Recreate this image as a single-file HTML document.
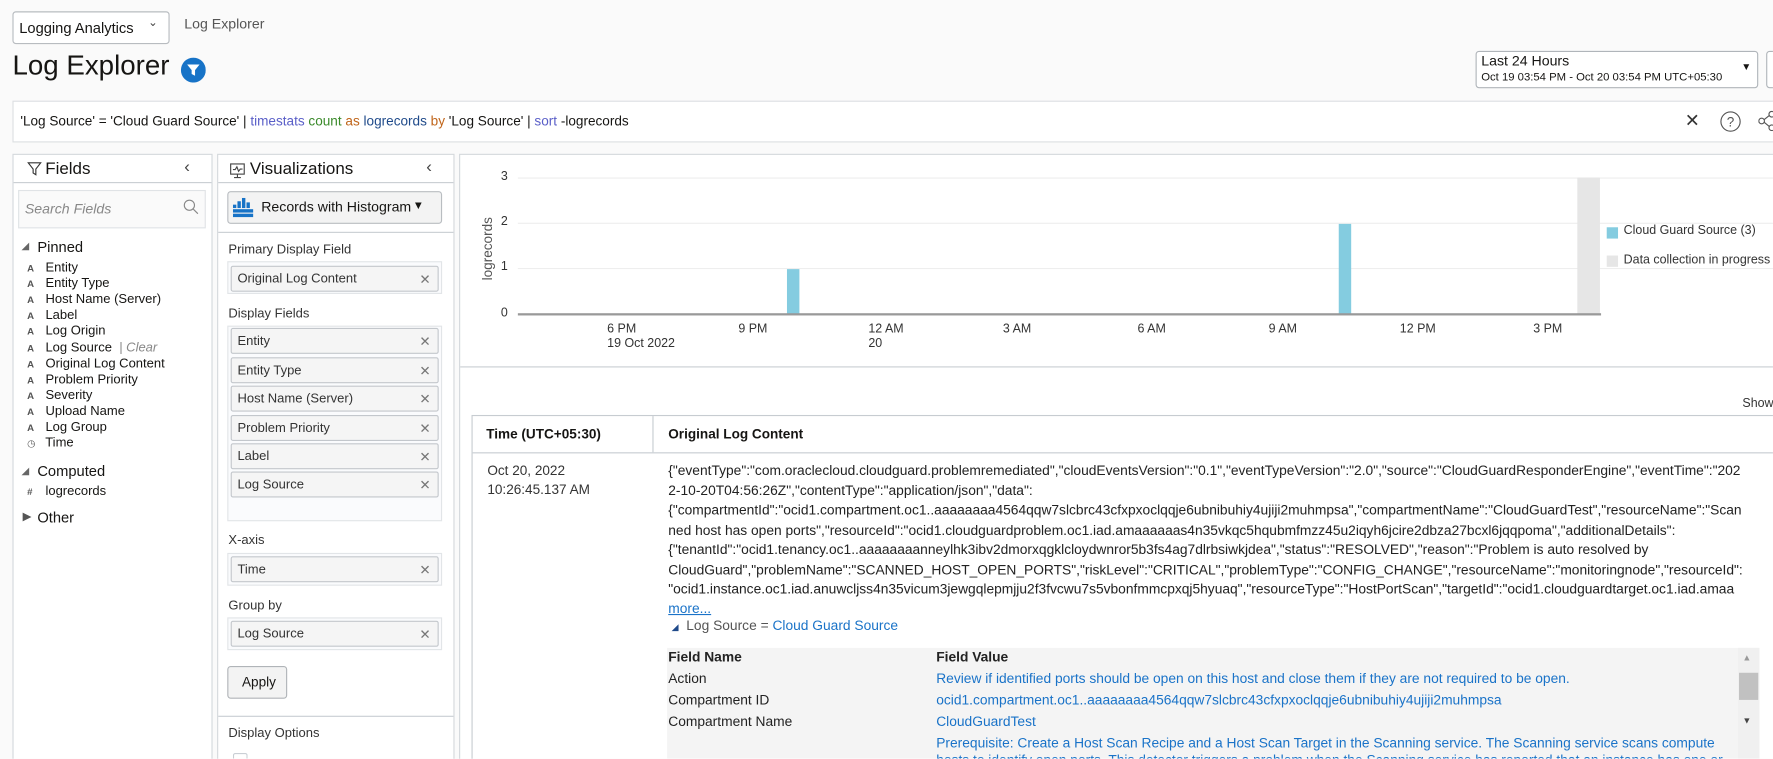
<!DOCTYPE html>
<html><head><meta charset="utf-8">
<style>
*{box-sizing:border-box;margin:0;padding:0}
body{width:1773px;height:759px;overflow:hidden;background:#fafafa;font-family:"Liberation Sans",Arial,sans-serif;font-size:12px;color:#161513;position:relative}
#w{position:absolute;left:0;top:0;width:1568px;height:671px;overflow:hidden;transform:scale(1.1307);transform-origin:0 0}
.a{position:absolute;white-space:nowrap}
.box{position:absolute;border:1px solid #c7cdd3;background:#fff}
.chip{position:absolute;left:204px;width:184px;height:23px;background:#f5f5f5;border:1px solid #c3c7cc;border-radius:2px;font-size:11.5px;padding:5px 0 0 5px;color:#333}
.chip .x{position:absolute;right:6px;top:4px;color:#777;font-size:12px}
.fl{position:absolute;left:24px;font-size:11.5px;color:#161513;white-space:nowrap}
.fl b{display:inline-block;width:13px;font-size:8.5px;color:#555;font-weight:bold}
.lbl{position:absolute;left:202px;font-size:11.5px;color:#333}
.ax{position:absolute;font-size:11px;color:#333;white-space:nowrap}
.lc{position:absolute;left:591px;font-size:12.2px;color:#222;white-space:nowrap}
.blue{color:#1a73c8}
</style></head><body><div id="w">

<div class="box" style="left:11px;top:10px;width:139px;height:29px;border-radius:3px;border-color:#b8bcc0"></div>
<div class="a" style="left:17px;top:17px;font-size:13px">Logging Analytics</div>
<div class="a" style="left:131px;top:15px;font-size:10px;color:#444">&#8964;</div>
<div class="a" style="left:163px;top:14px;font-size:12.5px;color:#555">Log Explorer</div>
<div class="a" style="left:11px;top:45px;font-size:24.5px;color:#161513">Log Explorer</div>
<svg class="a" style="left:160px;top:51px" width="22" height="22" viewBox="0 0 22 22"><circle cx="11" cy="11" r="11" fill="#1773c7"/><path d="M5.5 6h11l-4 5v5l-3 -1.5v-3.5z" fill="#fff"/></svg>

<div class="box" style="left:1305px;top:45px;width:250px;height:33px;border-radius:3px;border-color:#b0b5ba"></div>
<div class="a" style="left:1310px;top:47px;font-size:12.5px">Last 24 Hours</div>
<div class="a" style="left:1310px;top:63px;font-size:10px">Oct 19 03:54 PM - Oct 20 03:54 PM UTC+05:30</div>
<div class="a" style="left:1540px;top:54px;font-size:9px">&#9660;</div>
<div class="box" style="left:1562px;top:45px;width:20px;height:33px;border-radius:3px;border-color:#b0b5ba"></div>

<div class="box" style="left:11px;top:89px;width:1580px;height:37px;border-color:#dcdfe2;background:#fff"></div>
<div class="a" style="left:18px;top:100px;font-size:12px"><span>'Log Source' = 'Cloud Guard Source' | </span><span style="color:#5a5fc8">timestats</span> <span style="color:#3a8a2a">count</span> <span style="color:#c0651a">as</span> <span style="color:#1f4a8a">logrecords</span> <span style="color:#c0651a">by</span> 'Log Source' | <span style="color:#5a5fc8">sort</span> -logrecords</div>
<div class="a" style="left:1490px;top:97px;font-size:16px;color:#333">&#10005;</div>
<svg class="a" style="left:1521px;top:98px" width="19" height="19"><circle cx="9.5" cy="9.5" r="8.5" fill="none" stroke="#555"/><text x="9.5" y="14" font-size="12" text-anchor="middle" fill="#555" font-family="Liberation Sans">?</text></svg>
<svg class="a" style="left:1555px;top:98px" width="18" height="18"><circle cx="3" cy="9" r="2.5" fill="none" stroke="#555"/><circle cx="12" cy="3" r="2.5" fill="none" stroke="#555"/><circle cx="12" cy="15" r="2.5" fill="none" stroke="#555"/><path d="M5 8L10 4M5 10L10 14" stroke="#555"/></svg>

<div class="box" style="left:11px;top:136px;width:177px;height:540px;border-color:#d4d8dc"></div>
<div style="position:absolute;left:12px;top:161px;width:175px;height:1px;background:#c9ced3"></div>
<svg class="a" style="left:24px;top:143px" width="13" height="13"><path d="M1 1h11l-4.3 5.5v5l-2.4 -1.5v-3.5z" fill="none" stroke="#333"/></svg>
<div class="a" style="left:40px;top:141px;font-size:15px">Fields</div>
<div class="a" style="left:163px;top:139px;font-size:15px;color:#444">&#8249;</div>
<div class="box" style="left:16px;top:168px;width:166px;height:34px;border-color:#e0e3e6;background:#fafafa"></div>
<div class="a" style="left:22px;top:178px;font-size:12.5px;font-style:italic;color:#888">Search Fields</div>
<svg class="a" style="left:162px;top:176px" width="14" height="14"><circle cx="5.5" cy="5.5" r="4.5" fill="none" stroke="#888"/><path d="M9 9l4 4" stroke="#888"/></svg>
<div class="a" style="left:19px;top:212px;font-size:9px;color:#666">&#9698;</div>
<div class="a" style="left:33px;top:211px;font-size:13px">Pinned</div>
<div class="fl" style="top:231px"><b>A</b> Entity</div>
<div class="fl" style="top:245px"><b>A</b> Entity Type</div>
<div class="fl" style="top:259px"><b>A</b> Host Name (Server)</div>
<div class="fl" style="top:273px"><b>A</b> Label</div>
<div class="fl" style="top:287px"><b>A</b> Log Origin</div>
<div class="fl" style="top:302px"><b>A</b> Log Source &nbsp;<span style="color:#888;font-style:italic">| Clear</span></div>
<div class="fl" style="top:316px"><b>A</b> Original Log Content</div>
<div class="fl" style="top:330px"><b>A</b> Problem Priority</div>
<div class="fl" style="top:344px"><b>A</b> Severity</div>
<div class="fl" style="top:358px"><b>A</b> Upload Name</div>
<div class="fl" style="top:372px"><b>A</b> Log Group</div>
<div class="fl" style="top:386px"><b style="font-weight:normal">&#9719;</b> Time</div>
<div class="a" style="left:19px;top:411px;font-size:9px;color:#666">&#9698;</div>
<div class="a" style="left:33px;top:409px;font-size:13px">Computed</div>
<div class="fl" style="top:429px"><b>#</b> logrecords</div>
<div class="a" style="left:20px;top:452px;font-size:10px;color:#555">&#9654;</div>
<div class="a" style="left:33px;top:450px;font-size:13px">Other</div>

<div class="box" style="left:192px;top:136px;width:210px;height:540px;border-color:#d4d8dc"></div>
<div style="position:absolute;left:193px;top:161px;width:208px;height:1px;background:#c9ced3"></div>
<div style="position:absolute;left:193px;top:205px;width:208px;height:1px;background:#c9ced3"></div>
<div style="position:absolute;left:193px;top:633px;width:208px;height:1px;background:#c9ced3"></div>
<svg class="a" style="left:203px;top:144px" width="14" height="14"><rect x="1" y="1" width="12" height="9" fill="none" stroke="#444"/><path d="M3 6l2 0 1.5-2.5 1.5 4 1.5-2h2M7 10v3M4 13h6" fill="none" stroke="#444"/></svg>
<div class="a" style="left:221px;top:141px;font-size:15px">Visualizations</div>
<div class="a" style="left:377px;top:139px;font-size:15px;color:#444">&#8249;</div>
<div class="box" style="left:201px;top:169px;width:190px;height:29px;background:#f3f3f3;border-color:#b9bdc1;border-radius:3px"></div>
<svg class="a" style="left:206px;top:175px" width="18" height="18"><g fill="#1773c7"><rect x="0" y="6" width="3" height="3"/><rect x="4" y="3" width="3" height="6"/><rect x="8" y="0" width="3" height="9"/><rect x="12" y="4" width="3" height="5"/><rect x="0" y="10" width="18" height="3"/><rect x="0" y="14" width="18" height="3"/></g></svg>
<div class="a" style="left:231px;top:176px;font-size:12.5px">Records with Histogram</div>
<div class="a" style="left:365px;top:177px;font-size:10px">&#9660;</div>
<div class="lbl" style="top:215px">Primary Display Field</div>
<div class="box" style="left:201px;top:231px;width:190px;height:29px;border-color:#e2e5e8;background:#fafbfd"></div>
<div class="chip" style="top:235px">Original Log Content<span class="x">&#10005;</span></div>
<div class="lbl" style="top:272px">Display Fields</div>
<div class="box" style="left:201px;top:288px;width:190px;height:173px;border-color:#e2e5e8;background:#fafbfd"></div>
<div class="chip" style="top:290px">Entity<span class="x">&#10005;</span></div>
<div class="chip" style="top:316px">Entity Type<span class="x">&#10005;</span></div>
<div class="chip" style="top:341px">Host Name (Server)<span class="x">&#10005;</span></div>
<div class="chip" style="top:367px">Problem Priority<span class="x">&#10005;</span></div>
<div class="chip" style="top:392px">Label<span class="x">&#10005;</span></div>
<div class="chip" style="top:417px">Log Source<span class="x">&#10005;</span></div>
<div class="lbl" style="top:472px">X-axis</div>
<div class="box" style="left:201px;top:489px;width:190px;height:29px;border-color:#e2e5e8;background:#fafbfd"></div>
<div class="chip" style="top:492px">Time<span class="x">&#10005;</span></div>
<div class="lbl" style="top:530px">Group by</div>
<div class="box" style="left:201px;top:546px;width:190px;height:29px;border-color:#e2e5e8;background:#fafbfd"></div>
<div class="chip" style="top:549px">Log Source<span class="x">&#10005;</span></div>
<div class="box" style="left:201px;top:589px;width:53px;height:29px;background:#f3f3f3;border-color:#b0b4b8;border-radius:3px"></div>
<div class="a" style="left:214px;top:596px;font-size:12px">Apply</div>
<div class="lbl" style="top:643px">Display Options</div>
<div class="box" style="left:206px;top:666px;width:13px;height:5px;border-radius:2px 2px 0 0;border-bottom:none"></div>

<div class="box" style="left:406px;top:136px;width:1380px;height:540px;border-color:#d4d8dc"></div>
<div style="position:absolute;left:407px;top:324px;width:1366px;height:1px;background:#c9ced3"></div>
<div style="position:absolute;left:458px;top:157px;width:1115px;height:1px;background:#eee"></div>
<div style="position:absolute;left:458px;top:197px;width:1115px;height:1px;background:#eee"></div>
<div style="position:absolute;left:458px;top:237px;width:1115px;height:1px;background:#eee"></div>
<div style="position:absolute;left:1395px;top:157px;width:20px;height:121px;background:#e6e6e6"></div>
<div style="position:absolute;left:696px;top:238px;width:11px;height:40px;background:#84cce0"></div>
<div style="position:absolute;left:1184px;top:198px;width:11px;height:80px;background:#84cce0"></div>
<div style="position:absolute;left:458px;top:277px;width:958px;height:2px;background:#999"></div>
<div class="ax" style="left:443px;top:150px">3</div>
<div class="ax" style="left:443px;top:190px">2</div>
<div class="ax" style="left:443px;top:230px">1</div>
<div class="ax" style="left:443px;top:271px">0</div>
<div class="ax" style="left:424px;top:248px;transform:rotate(-90deg);transform-origin:0 0;font-size:12px;color:#555">logrecords</div>
<div class="ax" style="left:537px;top:285px">6 PM</div>
<div class="ax" style="left:537px;top:298px">19 Oct 2022</div>
<div class="ax" style="left:653px;top:285px">9 PM</div>
<div class="ax" style="left:768px;top:285px">12 AM</div>
<div class="ax" style="left:768px;top:298px">20</div>
<div class="ax" style="left:887px;top:285px">3 AM</div>
<div class="ax" style="left:1006px;top:285px">6 AM</div>
<div class="ax" style="left:1122px;top:285px">9 AM</div>
<div class="ax" style="left:1238px;top:285px">12 PM</div>
<div class="ax" style="left:1356px;top:285px">3 PM</div>
<div style="position:absolute;left:1421px;top:201px;width:10px;height:10px;background:#84cce0"></div>
<div class="ax" style="left:1436px;top:198px">Cloud Guard Source (3)</div>
<div style="position:absolute;left:1421px;top:226px;width:10px;height:10px;background:#e6e6e6"></div>
<div class="ax" style="left:1436px;top:224px">Data collection in progress</div>
<div class="ax" style="left:1541px;top:351px">Show</div>

<div class="box" style="left:417px;top:367px;width:1370px;height:310px;border-color:#c7ccd1"></div>
<div style="position:absolute;left:418px;top:400px;width:1356px;height:1px;background:#c7ccd1"></div>
<div style="position:absolute;left:577px;top:368px;width:1px;height:32px;background:#c7ccd1"></div>
<div class="a" style="left:430px;top:377px;font-size:12px;font-weight:bold">Time (UTC+05:30)</div>
<div class="a" style="left:591px;top:377px;font-size:12px;font-weight:bold">Original Log Content</div>
<div class="a" style="left:431px;top:409px;font-size:12px;color:#333">Oct 20, 2022</div>
<div class="a" style="left:431px;top:426px;font-size:12px;color:#333">10:26:45.137 AM</div>
<div class="lc" style="top:409px">{"eventType":"com.oraclecloud.cloudguard.problemremediated","cloudEventsVersion":"0.1","eventTypeVersion":"2.0","source":"CloudGuardResponderEngine","eventTime":"202</div>
<div class="lc" style="top:427px">2-10-20T04:56:26Z","contentType":"application/json","data":</div>
<div class="lc" style="top:444px">{"compartmentId":"ocid1.compartment.oc1..aaaaaaaa4564qqw7slcbrc43cfxpxoclqqje6ubnibuhiy4ujiji2muhmpsa","compartmentName":"CloudGuardTest","resourceName":"Scan</div>
<div class="lc" style="top:462px">ned host has open ports","resourceId":"ocid1.cloudguardproblem.oc1.iad.amaaaaaas4n35vkqc5hqubmfmzz45u2iqyh6jcire2dbza27bcxl6jqqpoma","additionalDetails":</div>
<div class="lc" style="top:479px">{"tenantId":"ocid1.tenancy.oc1..aaaaaaaanneylhk3ibv2dmorxqgklcloydwnror5b3fs4ag7dlrbsiwkjdea","status":"RESOLVED","reason":"Problem is auto resolved by</div>
<div class="lc" style="top:497px">CloudGuard","problemName":"SCANNED_HOST_OPEN_PORTS","riskLevel":"CRITICAL","problemType":"CONFIG_CHANGE","resourceName":"monitoringnode","resourceId":</div>
<div class="lc" style="top:514px">"ocid1.instance.oc1.iad.anuwcljss4n35vicum3jewgqlepmjju2f3fvcwu7s5vbonfmmcpxqj5hyuaq","resourceType":"HostPortScan","targetId":"ocid1.cloudguardtarget.oc1.iad.amaa</div>
<div class="lc blue" style="top:531px;text-decoration:underline">more...</div>
<div class="lc" style="top:546px;left:594px;color:#555"><span style="font-size:8px;color:#1f4a8a">&#9698;</span>&nbsp; Log Source = <span class="blue">Cloud Guard Source</span></div>

<div style="position:absolute;left:590px;top:573px;width:966px;height:98px;background:#f4f4f4"></div>
<div style="position:absolute;left:1537px;top:573px;width:19px;height:98px;background:#f0f0f0"></div>
<div class="a" style="left:1541px;top:577px;font-size:8px;color:#999">&#9650;</div>
<div style="position:absolute;left:1538px;top:595px;width:17px;height:24px;background:#c1c1c1"></div>
<div class="a" style="left:1541px;top:633px;font-size:8px;color:#444">&#9660;</div>
<div class="lc" style="top:574px;font-weight:bold">Field Name</div>
<div class="lc" style="top:574px;left:828px;font-weight:bold">Field Value</div>
<div class="lc" style="top:593px">Action</div>
<div class="lc blue" style="top:593px;left:828px">Review if identified ports should be open on this host and close them if they are not required to be open.</div>
<div class="lc" style="top:612px">Compartment ID</div>
<div class="lc blue" style="top:612px;left:828px">ocid1.compartment.oc1..aaaaaaaa4564qqw7slcbrc43cfxpxoclqqje6ubnibuhiy4ujiji2muhmpsa</div>
<div class="lc" style="top:631px">Compartment Name</div>
<div class="lc blue" style="top:631px;left:828px">CloudGuardTest</div>
<div class="lc blue" style="top:650px;left:828px">Prerequisite: Create a Host Scan Recipe and a Host Scan Target in the Scanning service. The Scanning service scans compute</div>
<div class="lc blue" style="top:665px;left:828px;height:6px;overflow:hidden">hosts to identify open ports. This detector triggers a problem when the Scanning service has reported that an instance has one or</div>
</div></body></html>
